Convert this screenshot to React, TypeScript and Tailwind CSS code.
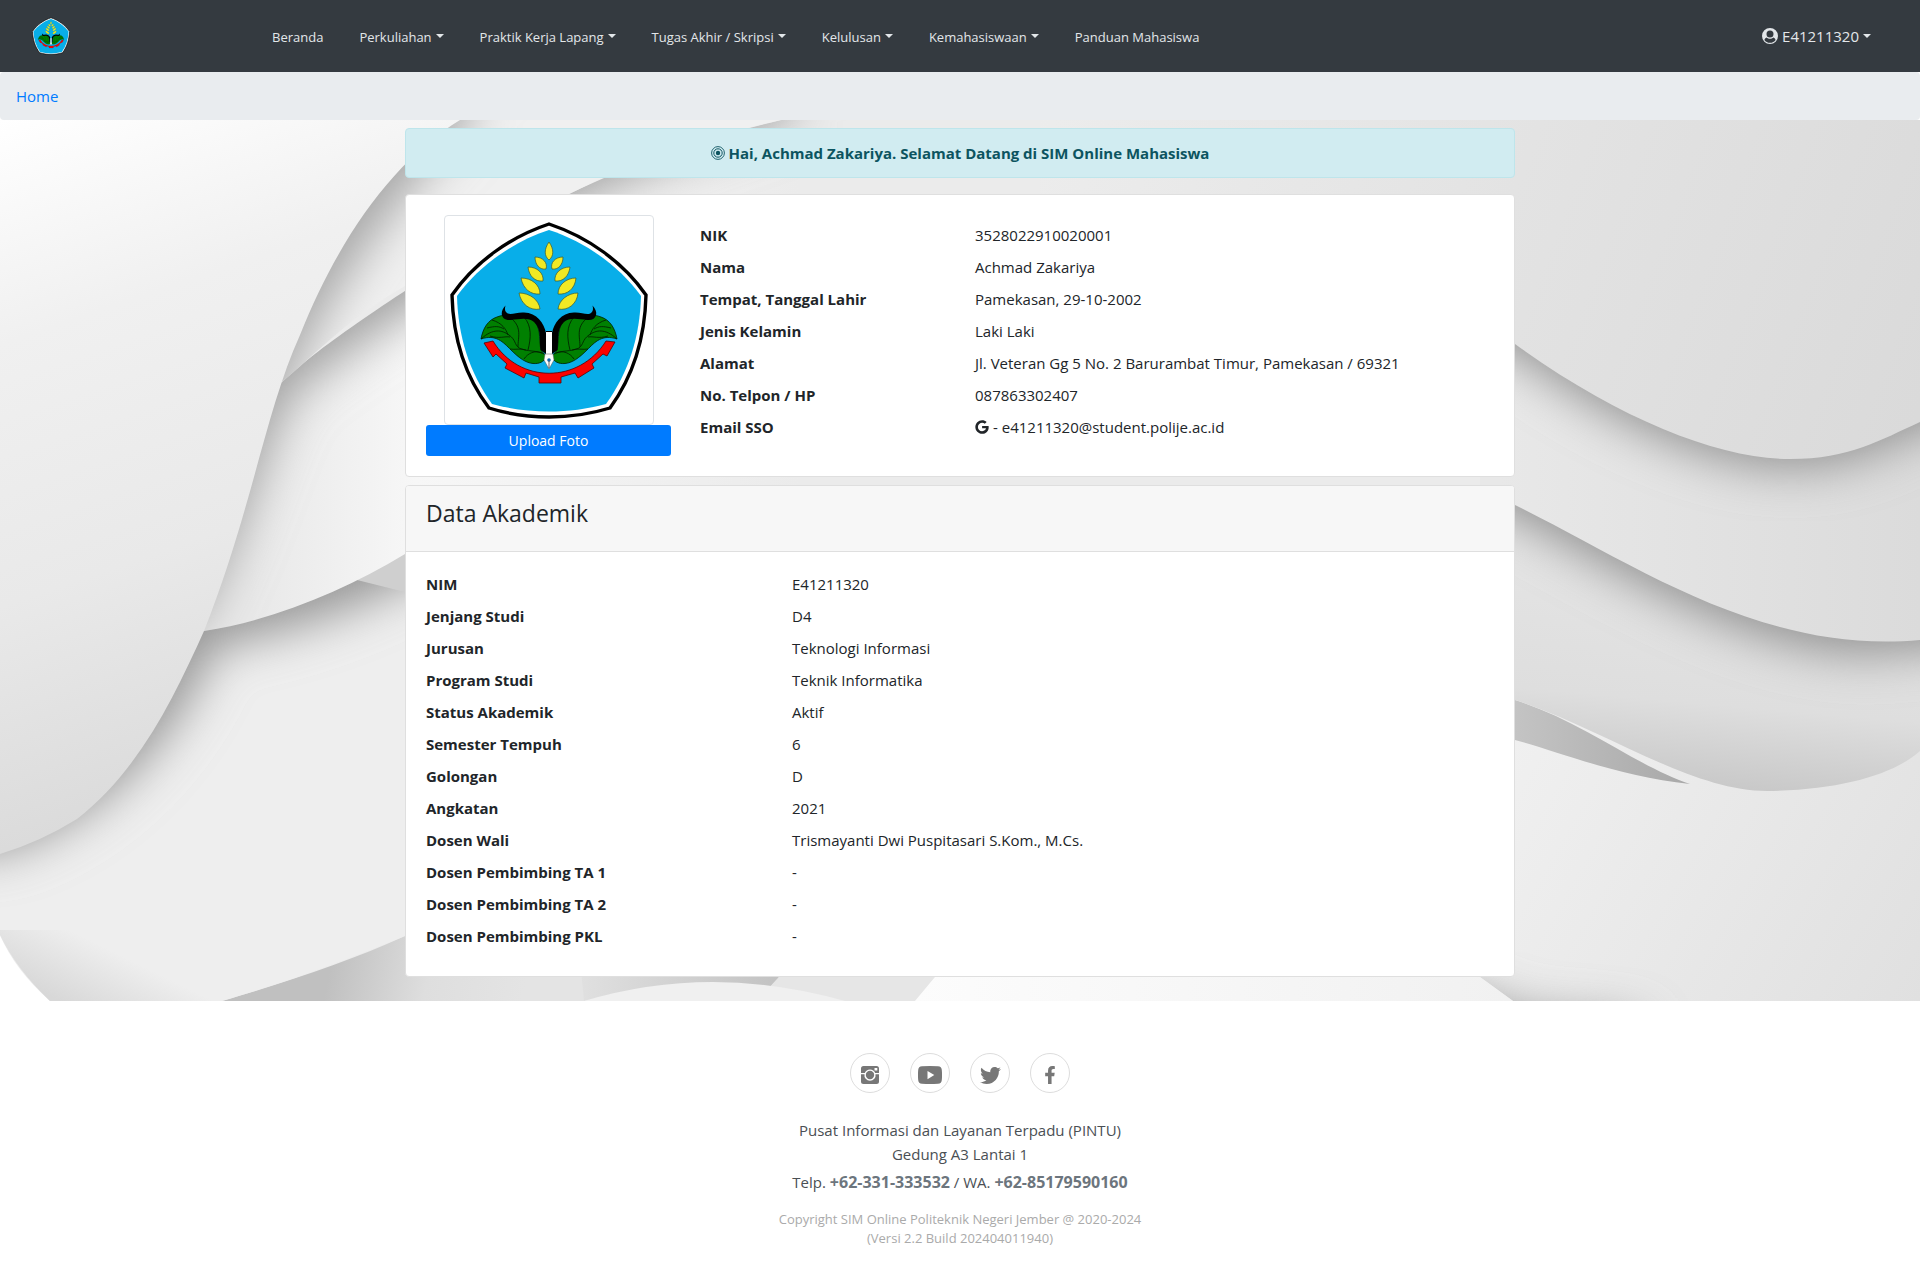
import React from "react";
import { FaFacebookF, FaGoogle, FaTwitter } from "react-icons/fa";

const navItems = [
  { label: "Beranda", menu: false },
  { label: "Perkuliahan", menu: true },
  { label: "Praktik Kerja Lapang", menu: true },
  { label: "Tugas Akhir / Skripsi", menu: true },
  { label: "Kelulusan", menu: true },
  { label: "Kemahasiswaan", menu: true },
  { label: "Panduan Mahasiswa", menu: false },
];

const profile: [string, React.ReactNode][] = [
  ["NIK", "3528022910020001"],
  ["Nama", "Achmad Zakariya"],
  ["Tempat, Tanggal Lahir", "Pamekasan, 29-10-2002"],
  ["Jenis Kelamin", "Laki Laki"],
  ["Alamat", "Jl. Veteran Gg 5 No. 2 Barurambat Timur, Pamekasan / 69321"],
  ["No. Telpon / HP", "087863302407"],
  [
    "Email SSO",
    <div className="flex items-center gap-1">
      <FaGoogle className="size-[14px]" aria-label="Google" />
      <span>- e41211320@student.polije.ac.id</span>
    </div>,
  ],
];

const academic: [string, string][] = [
  ["NIM", "E41211320"],
  ["Jenjang Studi", "D4"],
  ["Jurusan", "Teknologi Informasi"],
  ["Program Studi", "Teknik Informatika"],
  ["Status Akademik", "Aktif"],
  ["Semester Tempuh", "6"],
  ["Golongan", "D"],
  ["Angkatan", "2021"],
  ["Dosen Wali", "Trismayanti Dwi Puspitasari S.Kom., M.Cs."],
  ["Dosen Pembimbing TA 1", "-"],
  ["Dosen Pembimbing TA 2", "-"],
  ["Dosen Pembimbing PKL", "-"],
];

function Caret() {
  return <span className="mb-1 ml-1 inline-block border-x-4 border-t-4 border-x-transparent border-t-current align-middle" />;
}

function Wing() {
  return (
    <>
      <path
        d="M32 119 C34 108 39 100 48 97 C58 93 80 93 87 103 C92 111 90 122 92 130 C94 133 97 135 97 137 C95 142 90 144 84 143.500 C77 143 70 138 62 130 C54 122 47 114 32 119 Z"
        fill="#008001"
        stroke="#001f00"
        strokeWidth="0.8"
      />
      <path
        d="M32 119 C44 108 53 110 60 115 C67 120 65 124 70 128 C78 132 88 130 95 134 M38 108 C46 106 50 106 55 109 M43 100 C53 103 57 109 59 115 M63 99 C73 108 69 117 69 127 M75 97 C83 106 82 118 79 130 M41 116 C50 119 56 116 61 117 M61 129 C66 130 72 128 77 130 M75 139 C79 133 86 130 93 133"
        fill="none"
        stroke="#001a00"
        strokeWidth="0.8"
      />
      <path
        d="M56.500 85.500 C50 92 52 101 62 100 C70 99 80 97 85 102 C93 110 90 120 91.500 130 L97 134 V113 C95 103 88 93 75 92.500 C67 92 61 96 57.500 92.500 C56 91 55.500 89 56.500 85.500 Z"
        fill="#000"
      />
    </>
  );
}

function Emblem({ className }: { className: string }) {
  return (
    <svg viewBox="0 0 200 200" className={className} role="img" aria-label="Politeknik Negeri Jember">
      <path
        d="M100 4 C139 17 174 42 197 75 C196 117 185 155 161 188 C122 200 78 200 40 188 C15 155 4 117 3 75 C26 42 61 17 100 4 Z"
        fill="#fff"
        stroke="#000"
        strokeWidth="3.4"
      />
      <path
        d="M100 10 C137 22 170 46 192 76 C191 116 180 152 157 184 C120 194 80 194 43 184 C20 152 9 116 8 76 C30 46 63 22 100 10 Z"
        fill="#08aee9"
      />
      <g fill="#f1e924" stroke="#3f5a2a" strokeWidth="0.700">
        <path d="M100 22 C105 29 105 36 100 40 C95 36 95 29 100 22 Z" />
        <path d="M86 37 C94 37 99 43 97 49 C91 50 86 45 86 37 Z" />
        <path d="M114 37 C106 37 101 43 103 49 C109 50 114 45 114 37 Z" />
        <path d="M79 47 C88 47 95 53 94 61 C86 62 80 56 79 47 Z" />
        <path d="M121 47 C112 47 105 53 106 61 C114 62 120 56 121 47 Z" />
        <path d="M72 58 C83 58 91 65 91 74 C82 75 74 69 72 58 Z" />
        <path d="M127 58 C117 58 109 65 109 74 C118 75 126 69 127 58 Z" />
        <path d="M70 73 C81 73 90 80 91 89 C81 91 72 84 70 73 Z" />
        <path d="M129 73 C119 73 110 80 109 89 C119 91 128 84 129 73 Z" />
      </g>
      <Wing />
      <g transform="translate(200 0) scale(-1 1)">
        <Wing />
      </g>
      <path
        d="M44 121 C70 164 130 164 157 121 L166 122 L158 136 L154 134 L143 144 L145 148 L129 158 L126 153 L112 157 L112 163 L90 163 L90 157 L77 153 L75 158 L56 148 L58 144 L47 134 L44 137 L35 123 Z"
        fill="#fb0200"
        stroke="#5a0000"
        strokeWidth="0.8"
      />
      <path d="M97 111 H103 V135 H97 Z" fill="#fff" />
      <path d="M97 111.500 H103" stroke="#000" strokeWidth="1" />
      <path d="M96 134 H104 L105 140 L100 149 L95 140 Z" fill="#fff" stroke="#555" strokeWidth="0.500" />
      <circle cx="100" cy="140" r="1.8" fill="#1668b0" />
      <path d="M100 141 V148" stroke="#333" strokeWidth="0.8" />
    </svg>
  );
}

function UserIcon() {
  return (
    <svg viewBox="0 0 16 16" className="size-4" fill="currentColor" aria-hidden="true">
      <path
        fillRule="evenodd"
        d="M8 0a8 8 0 1 1 0 16A8 8 0 0 1 8 0ZM8 2.6a3.5 3.5 0 1 0 0 7 3.5 3.5 0 0 0 0-7ZM4.6 9.4C3.3 9.8 2.7 10.7 2.4 11.9 3.6 13.7 5.6 14.8 8 14.8s4.4-1.1 5.6-2.9C13.3 10.7 12.7 9.8 11.4 9.4 10.5 10.3 9.3 10.7 8 10.7S5.5 10.3 4.6 9.4Z"
      />
    </svg>
  );
}

function Bullseye() {
  return (
    <svg viewBox="0 0 14 14" className="size-[14px]" fill="none" stroke="currentColor" aria-hidden="true">
      <circle cx="7" cy="7" r="6.4" strokeWidth="0.9" />
      <circle cx="7" cy="7" r="4.2" strokeWidth="1" />
      <circle cx="7" cy="7" r="2.2" fill="currentColor" stroke="none" />
    </svg>
  );
}

function InstagramIcon() {
  return (
    <svg viewBox="0 0 18 18" className="size-[18px]" aria-hidden="true">
      <path
        fill="currentColor"
        fillRule="evenodd"
        d="M2.5 0H15.5A2.5 2.5 0 0 1 18 2.5V7H14.2A5.6 5.6 0 0 0 3.8 7H0V2.5A2.5 2.5 0 0 1 2.5 0ZM13.5 2V4.5H16.3V2ZM0 8.2H3.5A5.6 5.6 0 1 0 14.5 8.2H18V15.5A2.5 2.5 0 0 1 15.5 18H2.5A2.5 2.5 0 0 1 0 15.5Z"
      />
      <circle cx="9" cy="9" r="4.2" fill="currentColor" />
    </svg>
  );
}

function YoutubeIcon() {
  return (
    <svg viewBox="0 0 24 18" className="h-[18px] w-6" aria-hidden="true">
      <path
        fill="currentColor"
        fillRule="evenodd"
        d="M4 .3Q12-.3 20 .3Q23.600.5 23.800 4Q24.300 9 23.800 14Q23.600 17.500 20 17.700Q12 18.300 4 17.700Q.4 17.500.2 14Q-.3 9 .2 4Q.4.5 4 .3ZM9.500 5V13.200L16.300 9Z"
      />
    </svg>
  );
}

function Waves() {
  return (
    <svg viewBox="0 120 1920 881" preserveAspectRatio="none" className="absolute inset-0 h-full w-full" aria-hidden="true">
      <defs>
        <filter id="shade" x="-20%" y="-20%" width="140%" height="140%">
          <feGaussianBlur stdDeviation="24" />
        </filter>
        <linearGradient id="lobe" gradientUnits="userSpaceOnUse" x1="0" y1="120" x2="230" y2="790">
          <stop offset="0" stopColor="#ffffff" />
          <stop offset="0.3" stopColor="#f0f0f0" />
          <stop offset="0.65" stopColor="#e9e9e9" />
          <stop offset="1" stopColor="#dadada" />
        </linearGradient>
        <linearGradient id="second" gradientUnits="userSpaceOnUse" x1="250" y1="0" x2="800" y2="0">
          <stop offset="0" stopColor="#e8e8e8" />
          <stop offset="0.3" stopColor="#f7f7f7" />
          <stop offset="1" stopColor="#ebebeb" />
        </linearGradient>
        <linearGradient id="upper" gradientUnits="userSpaceOnUse" x1="1000" y1="120" x2="1900" y2="460">
          <stop offset="0" stopColor="#ededed" />
          <stop offset="1" stopColor="#dadada" />
        </linearGradient>
        <linearGradient id="middle" gradientUnits="userSpaceOnUse" x1="1500" y1="0" x2="1920" y2="0">
          <stop offset="0" stopColor="#e8e8e8" />
          <stop offset="1" stopColor="#dbdbdb" />
        </linearGradient>
        <linearGradient id="third" gradientUnits="userSpaceOnUse" x1="1650" y1="560" x2="1630" y2="790">
          <stop offset="0" stopColor="#e4e4e4" />
          <stop offset="0.6" stopColor="#dedede" />
          <stop offset="1" stopColor="#c6c6c6" />
        </linearGradient>
        <linearGradient id="ground" gradientUnits="userSpaceOnUse" x1="1500" y1="760" x2="1920" y2="1001">
          <stop offset="0" stopColor="#f0f0f0" />
          <stop offset="1" stopColor="#e0e0e0" />
        </linearGradient>
        <linearGradient id="wedge" gradientUnits="userSpaceOnUse" x1="1500" y1="0" x2="1690" y2="0">
          <stop offset="0" stopColor="#c6c6c6" />
          <stop offset="1" stopColor="#a8a8a8" />
        </linearGradient>
        <linearGradient id="floor" gradientUnits="userSpaceOnUse" x1="330" y1="970" x2="520" y2="1010">
          <stop offset="0" stopColor="#c0c0c0" />
          <stop offset="0.5" stopColor="#dedede" />
          <stop offset="1" stopColor="#e4e4e4" />
        </linearGradient>
        <linearGradient id="floorDark" gradientUnits="userSpaceOnUse" x1="580" y1="0" x2="780" y2="0">
          <stop offset="0" stopColor="#e0e0e0" />
          <stop offset="1" stopColor="#c2c2c2" />
        </linearGradient>
        <linearGradient id="floorLight" gradientUnits="userSpaceOnUse" x1="915" y1="0" x2="1510" y2="0">
          <stop offset="0" stopColor="#fcfcfc" />
          <stop offset="1" stopColor="#f1f1f1" />
        </linearGradient>
        <linearGradient id="bottomLeft" gradientUnits="userSpaceOnUse" x1="60" y1="1001" x2="90" y2="940">
          <stop offset="0" stopColor="#d8d8d8" />
          <stop offset="1" stopColor="#d8d8d8" stopOpacity="0" />
        </linearGradient>
        <clipPath id="bodyClip">
          <path d="M0 480 H697 V850 C600 880 500 906 405 936 C343 961 300 978 222 1001 H50 Q17 970 0 935 Z" />
        </clipPath>
        <clipPath id="secondClip">
          <path d="M150 300 L282 382 C330 335 480 240 569 194 C640 160 700 140 781 120 H1050 V490 H528 C490 525 450 536 405 554 C345 590 275 620 204 631 H100 Z" />
        </clipPath>
        <clipPath id="firstClip">
          <path d="M200 430 L282 382 C320 350 350 317 405 286 C460 250 510 222 569 194 C640 158 700 138 781 120 H200 Z" />
        </clipPath>
        <clipPath id="upperRightClip">
          <path d="M1480 300 H1920 V640 C1760 655 1630 561 1515 505 L1480 490 Z" />
        </clipPath>
        <clipPath id="rightClip">
          <path d="M1480 300 H1920 V751 C1893 775 1840 790 1767 791 C1690 791 1600 727 1515 700 L1480 690 Z" />
        </clipPath>
        <clipPath id="groundClip">
          <path d="M1480 900 H1920 V1001 H1513 L1480 977 Z" />
        </clipPath>
      </defs>

      <rect y="120" width="1920" height="881" fill="#ebebeb" />
      <rect x="1200" y="600" width="720" height="401" fill="url(#ground)" />
      <g clipPath="url(#groundClip)">
        <path d="M1420 970 L1520 1015 L1640 1025 V1060 H1400 Z" fill="#909090" filter="url(#shade)" />
      </g>

      <path d="M0 935 V1001 H50 Q15 970 0 935 Z" fill="#ffffff" />
      <path d="M222 1001 C290 981 350 961 405 936 L800 900 V1001 Z" fill="url(#floor)" />
      <path d="M584 1001 L580 960 H792 L779 977 L768 989 Q711 975 584 1001 Z" fill="url(#floorDark)" />
      <path d="M779 977 L768 989 L845 1001 H915 L935 977 Z" fill="#e6e6e6" />
      <path d="M584 1001 Q711 963 845 1001 Z" fill="#f0f0f0" />
      <path d="M915 1001 L935 977 V950 H1440 L1480 977 L1513 1001 Z" fill="url(#floorLight)" />

      <g clipPath="url(#bodyClip)">
        <rect x="0" y="480" width="700" height="521" fill="#eeeeee" />
        <path d="M0 852 C100 822 180 735 214 645 C300 630 360 605 420 575 L697 470 V380 H-60 V852 Z" fill="#969696" filter="url(#shade)" />
        <path d="M353 579 L405 592 L640 640 V480 H400 Z" fill="#cfcfcf" />
        <rect y="930" width="230" height="71" fill="url(#bottomLeft)" />
      </g>

      <g clipPath="url(#secondClip)">
        <rect x="100" y="120" width="950" height="520" fill="url(#second)" />
        <path d="M190 631 C240 545 265 435 292 392 C350 345 480 265 569 204 C640 170 700 150 790 120 V20 H60 V631 Z" fill="#a0a0a0" filter="url(#shade)" />
      </g>

      <g clipPath="url(#firstClip)">
        <rect x="200" y="120" width="600" height="320" fill="#f0f0f0" />
        <path d="M274 420 C300 335 385 205 470 120 V20 H180 V420 Z" fill="#a6a6a6" filter="url(#shade)" />
      </g>

      <path
        d="M0 120 H460 C395 160 340 235 300 335 C265 412 252 510 204 631 C175 695 140 770 77 819 Q40 842 0 854 Z"
        fill="url(#lobe)"
      />

      <path d="M1440 720 L1515 700 C1580 720 1640 768 1690 784 C1620 777 1560 752 1515 740 L1440 720 Z" fill="url(#wedge)" />
      <g clipPath="url(#rightClip)">
        <rect x="1480" y="300" width="440" height="500" fill="url(#third)" />
        <path d="M1400 465 L1515 515 C1650 590 1760 652 1867 654 L2000 642 V300 H1400 Z" fill="#929292" filter="url(#shade)" />
      </g>
      <g clipPath="url(#upperRightClip)">
        <rect x="1480" y="300" width="440" height="400" fill="url(#middle)" />
        <path d="M1400 310 L1515 352 C1620 428 1720 467 1790 467 C1850 467 1880 448 1920 430 L2020 390 V200 H1400 Z" fill="#929292" filter="url(#shade)" />
      </g>
      <path d="M1040 120 H1920 V422 C1880 440 1850 459 1790 459 C1720 459 1620 420 1515 344 L1400 290 V194 H1040 Z" fill="url(#upper)" />
    </svg>
  );
}

function DataTable({ rows, labelWidth }: { rows: [string, React.ReactNode][]; labelWidth: string }) {
  return (
    <table className="w-full text-left text-[15px] leading-6">
      <tbody>
        {rows.map(([label, value]) => (
          <tr key={label}>
            <th scope="row" className={labelWidth + " py-1 pr-4 font-bold"}>
              {label}
            </th>
            <td className="py-1">{value}</td>
          </tr>
        ))}
      </tbody>
    </table>
  );
}

const social = [
  { name: "Instagram", icon: <InstagramIcon /> },
  { name: "YouTube", icon: <YoutubeIcon /> },
  { name: "Twitter", icon: <FaTwitter className="size-[21px]" /> },
  { name: "Facebook", icon: <FaFacebookF className="size-[18px]" /> },
];

export default function App() {
  return (
    <div className="min-h-screen bg-white font-['Open_Sans',sans-serif] text-[#212529]">
      <header className="flex min-h-[72px] items-center bg-[#343a40] pr-[49px] pl-8 text-[#e3e7ea]">
        <a href="#beranda" className="mr-[202px]" aria-label="SIM Online">
          <Emblem className="size-[38px]" />
        </a>
        <nav className="flex flex-1 flex-wrap items-center gap-x-9 pt-[3px] text-[13px]">
          {navItems.map((item) =>
            item.menu ? (
              <button key={item.label} type="button" className="whitespace-nowrap">
                {item.label}
                <Caret />
              </button>
            ) : (
              <a key={item.label} href={"#" + item.label} className="whitespace-nowrap">
                {item.label}
              </a>
            ),
          )}
        </nav>
        <button type="button" className="flex items-center gap-1 text-[15px] whitespace-nowrap">
          <UserIcon />
          <span>
            E41211320
            <Caret />
          </span>
        </button>
      </header>

      <nav aria-label="Breadcrumb" className="rounded bg-[#e9ecef] px-4 py-3 text-[15px] leading-6">
        <a href="#home" className="text-[#007bff]">
          Home
        </a>
      </nav>

      <main className="relative px-4 pt-2 pb-6">
        <Waves />
        <div className="relative mx-auto max-w-[1110px]">
          <div
            role="alert"
            className="mb-4 flex items-center justify-center gap-1 rounded border border-[#bee5eb] bg-[#d1ecf1] px-5 py-3 text-[15px] leading-6 font-bold text-[#0c5460]"
          >
            <Bullseye />
            <span>Hai, Achmad Zakariya. Selamat Datang di SIM Online Mahasiswa</span>
          </div>

          <section className="mb-2 grid rounded border border-[#dfdfdf] bg-white p-5 md:grid-cols-[245px_1fr] md:gap-x-[29px]">
            <div className="flex flex-col items-center">
              <div className="size-[210px] rounded border border-[#dee2e6] bg-white p-1">
                <Emblem className="h-full w-full" />
              </div>
              <button type="button" className="w-full rounded-[3px] bg-[#007bff] py-[5px] text-sm leading-[21px] text-white">
                Upload Foto
              </button>
            </div>
            <div className="pt-1">
              <DataTable rows={profile} labelWidth="w-[275px]" />
            </div>
          </section>

          <section className="overflow-hidden rounded border border-[#dfdfdf] bg-white">
            <h1 className="border-b border-[#dfdfdf] bg-[#f7f7f7] px-5 pt-3 pb-[23px] text-[23px] leading-[30px] font-medium">
              Data Akademik
            </h1>
            <div className="px-5 pt-4 pb-6">
              <DataTable rows={academic} labelWidth="w-[366px]" />
            </div>
          </section>
        </div>
      </main>

      <footer className="flex flex-col items-center pt-[52px] pb-5 text-center text-[15px] leading-6 text-[#4a4f54]">
        <div className="mb-[25px] flex gap-5">
          {social.map((item) => (
            <a
              key={item.name}
              href={"#" + item.name}
              aria-label={item.name}
              className="flex size-10 items-center justify-center rounded-full border border-[#dddddd] pt-1 text-[#777777]"
            >
              {item.icon}
            </a>
          ))}
        </div>
        <p>Pusat Informasi dan Layanan Terpadu (PINTU)</p>
        <p>Gedung A3 Lantai 1</p>
        <p className="mt-1">
          Telp. <strong className="text-base text-[#6c757d]">+62-331-333532</strong> / WA.{" "}
          <strong className="text-base text-[#6c757d]">+62-85179590160</strong>
        </p>
        <p className="mt-4 text-[13px] leading-[19px] text-[#aaaaaa]">
          Copyright SIM Online Politeknik Negeri Jember @ 2020-2024
          <br />
          (Versi 2.2 Build 202404011940)
        </p>
      </footer>
    </div>
  );
}
